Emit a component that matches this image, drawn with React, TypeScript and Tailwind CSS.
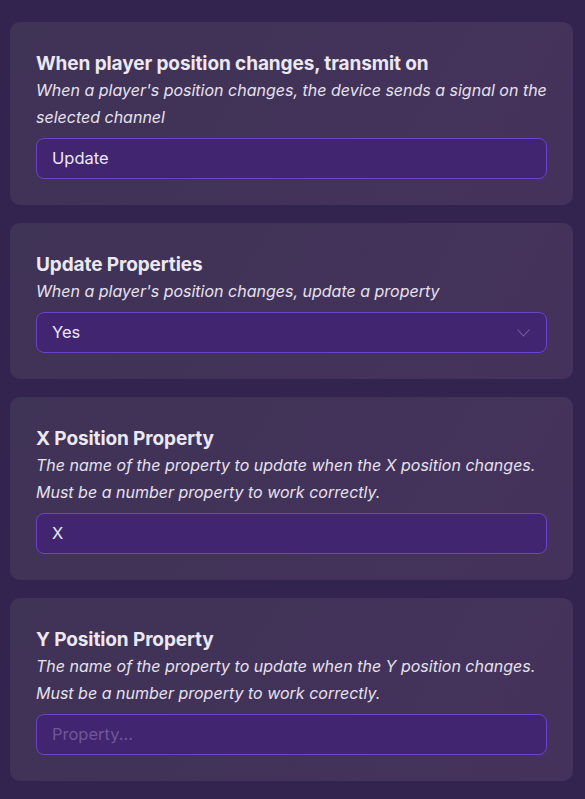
import React from 'react';

interface Field {
  title: string;
  description: string;
  value?: string;
  placeholder?: string;
  select?: boolean;
}

const fields: Field[] = [
  {
    title: 'When player position changes, transmit on',
    description: "When a player's position changes, the device sends a signal on the selected channel",
    value: 'Update',
  },
  {
    title: 'Update Properties',
    description: "When a player's position changes, update a property",
    value: 'Yes',
    select: true,
  },
  {
    title: 'X Position Property',
    description:
      'The name of the property to update when the X position changes. Must be a number property to work correctly.',
    value: 'X',
  },
  {
    title: 'Y Position Property',
    description:
      'The name of the property to update when the Y position changes. Must be a number property to work correctly.',
    placeholder: 'Property...',
  },
];

function FieldCard({ field }: { field: Field }) {
  return (
    <div className="rounded-[10px] bg-[linear-gradient(120deg,#3f3356,#45325c)] px-[26px] pt-[27px] pb-[26px]">
      <h2 className="text-[19px] leading-[29px] font-bold tracking-[-0.1px] text-[#ece8f1]">{field.title}</h2>
      <p className="mt-[-1px] text-[16px] leading-[27px] italic text-[#e6e1ec]">{field.description}</p>
      <div className="mt-[7px] flex h-[41px] items-center justify-between rounded-[8px] border border-[#6b42cb] bg-[#412571] pl-[15px] pr-[16px]">
        {field.value ? (
          <span className="text-[16.5px] text-[#ece8f3]">{field.value}</span>
        ) : (
          <span className="text-[16.5px] text-[#6f5797]">{field.placeholder}</span>
        )}
        {field.select && (
          <svg width="13" height="8" viewBox="0 0 13 8" fill="none" className="text-[#76609e]">
            <path d="M0.5 0.5L6.5 7L12.5 0.5" stroke="currentColor" strokeWidth="1.1" />
          </svg>
        )}
      </div>
    </div>
  );
}

export default function App() {
  return (
    <div
      className="min-h-screen bg-[#33244f] px-[10px] pt-[22px] pb-[20px]"
      style={{ fontFamily: 'Inter, "Noto Sans", sans-serif' }}
    >
      <div className="mr-[2px] flex flex-col gap-[18px]">
        {fields.map((f) => (
          <FieldCard key={f.title} field={f} />
        ))}
      </div>
    </div>
  );
}
